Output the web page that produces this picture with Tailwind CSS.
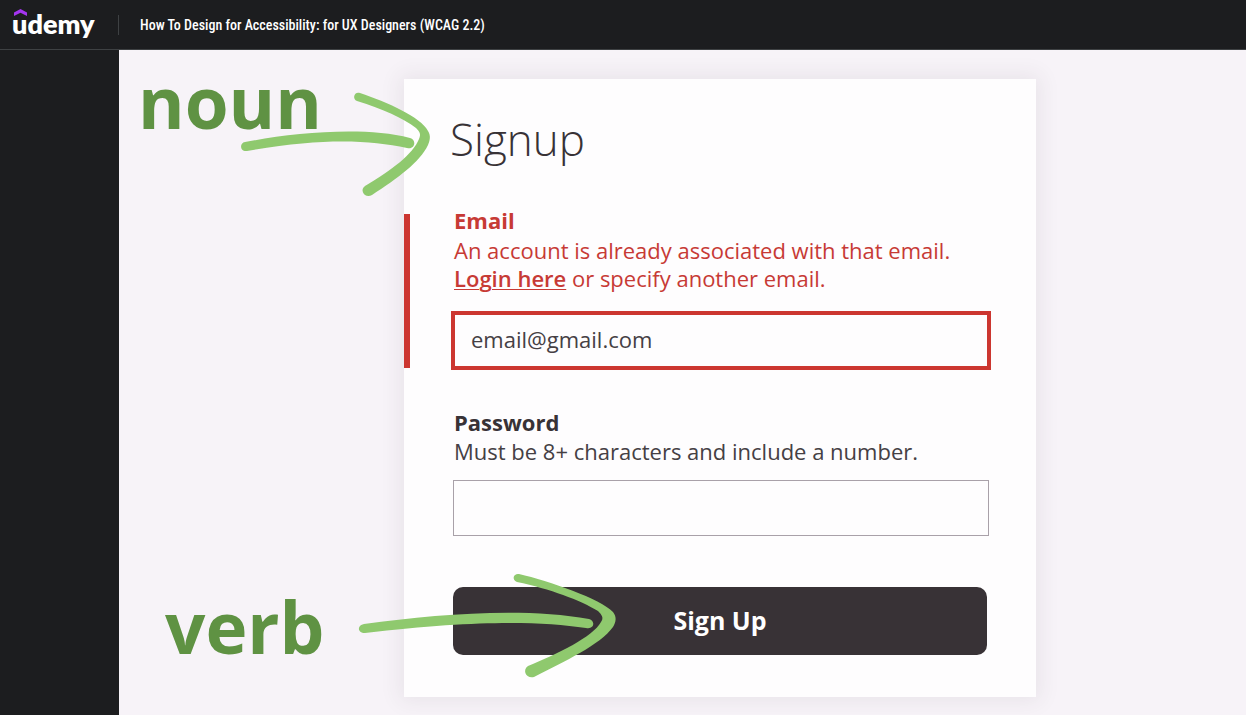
<!DOCTYPE html>
<html lang="en">
<head>
<meta charset="utf-8">
<title>How To Design for Accessibility</title>
<script src="https://cdn.jsdelivr.net/npm/@tailwindcss/browser@4"></script>
</head>
<body class="flex h-screen flex-col overflow-hidden bg-[#1c1d1f] font-['Open_Sans',sans-serif]">
<header class="flex h-[50px] shrink-0 items-center border-b border-[#3e4143] bg-[#1c1d1f] text-white">
  <a href="#" aria-label="udemy" class="relative ml-3 flex h-full w-[84px] items-center pb-[2px] font-['Lato',sans-serif] text-[27px] leading-8 font-extrabold">
    <svg class="absolute top-[9px] left-[2px] h-[7px] w-[13px]" viewBox="0 0 13 7" fill="#a435f0" aria-hidden="true"><path d="M0 3.600 6.500 0 13 3.600V7L6.500 3.700 0 7Z"/></svg>
    udemy
  </a>
  <div class="ml-[22px] h-5 w-px bg-[#3e4143]"></div>
  <h2 class="ml-[21px] font-['Roboto_Condensed','Liberation_Sans_Narrow',sans-serif] text-[14px] leading-5 font-medium whitespace-nowrap">How To Design for Accessibility: for UX Designers (WCAG 2.2)</h2>
</header>
<div class="flex min-h-0 grow">
  <aside class="w-[119px] shrink-0 bg-[#1c1d1f]"></aside>
  <main class="relative grow overflow-hidden bg-[#f7f3f8] pt-[29px] pr-4 pl-[285px] text-[#383236]">
    <form class="w-full max-w-[632px] bg-[#fefdfe] pt-[30px] pb-[42px] text-[22px] leading-7 shadow-[0_0_20px_4px_rgba(70,50,70,0.08)]">
      <h1 class="pl-[46px] text-[44px] leading-[60px] font-light">Signup</h1>
      <section class="relative mt-[37px] pr-[45px] pl-[47px] text-[#c73a35]">
        <span class="absolute top-[8px] bottom-[2px] left-0 w-[6px] bg-[#cc3630]"></span>
        <label for="email" class="block pl-[3px] font-bold">Email</label>
        <p class="mt-[2px] pl-[3px]">An account is already associated with that email. <a href="#" class="font-semibold underline decoration-1 underline-offset-2">Login here</a> or specify another email.</p>
        <input id="email" type="email" value="email@gmail.com" class="mt-[19px] block h-[59px] w-full border-4 border-[#cc3630] bg-transparent px-4 pb-[3px] text-[#454044] outline-none">
      </section>
      <section class="mt-[38px] pr-[47px] pl-[49px]">
        <label for="password" class="block pl-px font-bold">Password</label>
        <p class="mt-px pl-px text-[#454044]">Must be 8+ characters and include a number.</p>
        <input id="password" type="password" class="mt-[15px] block h-[56px] w-full border border-[#a9a1a9] bg-transparent px-4 outline-none">
        <div class="mt-[51px] pr-[2px]">
          <button type="button" class="block h-[68px] w-full rounded-[10px] bg-[#383236] pb-[2px] text-[25px] font-bold text-white">Sign Up</button>
        </div>
      </section>
    </form>

    <!-- Annotations drawn over the form -->
    <span class="absolute top-[3px] left-[19px] text-[71px] leading-[98px] font-bold text-[#5f9243]">noun</span>
    <span class="absolute top-[528px] left-[46px] text-[71px] leading-[98px] font-bold text-[#5f9243]">verb</span>
    <svg class="absolute top-[35px] left-[119px] h-[115px] w-[195px]" viewBox="0 0 195 115" fill="#8fc96e" aria-hidden="true">
      <path d="M7 57C55 48 125 41 172 53C179 55 177 65 169 63C130 55 84 53 9 66C2 67 1 58 7 57Z"/>
      <path d="M122 8C149 17 183 32 190 46C193 51 192 55 190 60C182 77 160 93 134 110C127 114 121 105 127 101C154 85 175 69 181 54C183 49 182 47 178 43C165 33 145 24 119 16C114 14 116 6 122 8Z"/>
    </svg>
    <svg class="absolute top-[515px] left-[235px] h-[120px] w-[270px]" viewBox="0 0 270 120" fill="#8fc96e" aria-hidden="true">
      <path d="M10 59C82 49 170 42 235 54C242 56 240 65 232 63C185 56 120 55 11 68C3 68 3 60 10 59Z"/>
      <path d="M165 9C195 16 247 34 259 47C263 52 262 57 259 62C246 80 211 96 180 112C172 114 168 105 174 101C203 89 239 72 247 57C250 53 248 50 244 46C226 35 196 24 163 17C157 14 160 8 165 9Z"/>
    </svg>
  </main>
</div>
</body>
</html>
